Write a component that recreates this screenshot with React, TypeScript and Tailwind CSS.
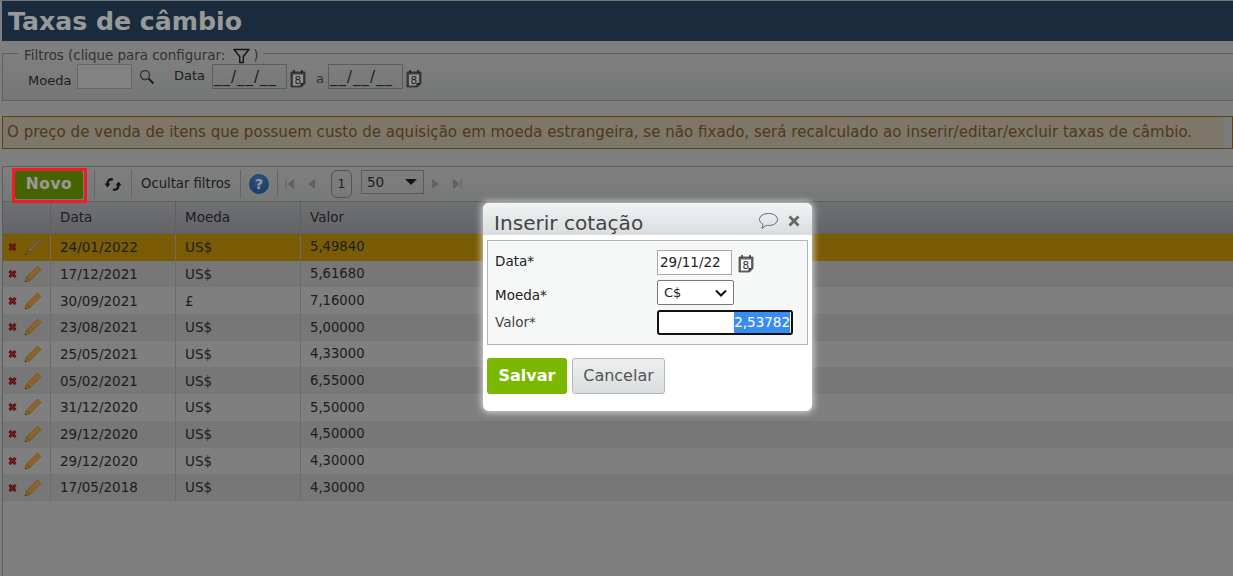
import React from "react";

const Calendar = () => (
  <svg width="16" height="19" viewBox="0 0 16 19" className="shrink-0">
    <path d="M1 3h14v11.500l-3.500 3.500H1z" fill="#6a6a6a" stroke="#444" strokeWidth="0.800" />
    <path d="M3 5.500h10v8.500l-2.500 2.500H3z" fill="#f6f6f6" />
    <path d="M4 1v3M12 1v3" stroke="#333" strokeWidth="1.500" />
    <text x="7.800" y="15" textAnchor="middle" fontSize="10.500" fontFamily="DejaVu Sans" fill="#333">8</text>
    <path d="M10.500 17.500l3.500-3.500h-3.500z" fill="#333" />
  </svg>
);

const Pencil = ({ faded }: { faded?: boolean }) => (
  <svg width="18" height="18" viewBox="0 0 18 18" className="shrink-0">
    {faded ? (
      <path d="M14 1.500l2.500 2.500L5.500 15l-4 1.500 1.500-4z" fill="#c9a050" stroke="#a08868" strokeWidth="1" />
    ) : (
      <path d="M13.500 1l3.500 3.500L5.500 16l-4.500 1 1-4.500z" fill="#e8a64a" stroke="#c8882e" strokeWidth="0.800" />
    )}
    <path d="M3 12.500l2.500 2.800" stroke="#a87428" strokeWidth="1" />
    <path d="M1 17l1.600-.4-1.200-1.200z" fill="#333" />
  </svg>
);

const Del = () => (
  <svg width="9" height="10" viewBox="0 0 9 10" className="shrink-0">
    <path d="M1.500 2l6 6M7.500 2l-6 6" stroke="#5a1a1a" strokeWidth="3" />
    <path d="M1.500 2l6 6M7.500 2l-6 6" stroke="#e0262c" strokeWidth="1.600" />
  </svg>
);

const rows = [
  ["24/01/2022", "US$", "5,49840"],
  ["17/12/2021", "US$", "5,61680"],
  ["30/09/2021", "£", "7,16000"],
  ["23/08/2021", "US$", "5,00000"],
  ["25/05/2021", "US$", "4,33000"],
  ["05/02/2021", "US$", "6,55000"],
  ["31/12/2020", "US$", "5,50000"],
  ["29/12/2020", "US$", "4,50000"],
  ["29/12/2020", "US$", "4,30000"],
  ["17/05/2018", "US$", "4,30000"],
];

export default function App() {
  return (
    <div className="relative h-[576px] w-[1233px] overflow-hidden bg-[#d4d4d4] font-['DejaVu_Sans',sans-serif] text-[13px] text-[#333]">
      <div className="flex h-full flex-col border-t border-t-[#c4c4c4] pl-[2px]">
        <div className="flex h-[40px] shrink-0 items-center bg-[#2b4966] pl-[6px] pt-[2px] text-[25.200px] font-bold text-white">Taxas de câmbio</div>

        <fieldset className="mx-0 mt-[5px] h-[55px] shrink-0 border border-r-0 border-[#a0a0a0] bg-gradient-to-b from-[#d4d4d4] to-[#c3c6c6] pl-[16px]">
          <legend className="flex h-[14px] translate-y-[3px] items-center px-[5px] text-[13.400px] leading-none text-[#555]">
            Filtros (clique para configurar:
            <svg width="17" height="16" viewBox="0 0 17 16" className="ml-[8px] mr-[3px]">
              <path d="M1 1.500h15L10.300 8.500v6h-3.600v-6z" fill="none" stroke="#222" strokeWidth="1.400" strokeLinejoin="round" />
            </svg>
            )
          </legend>
          <div className="flex items-start pl-[9px] pt-[4px]">
            <span className="mt-[7px] w-[49px]">Moeda</span>
            <div className="h-[25px] w-[55px] border border-[#aaa] bg-[#d9d9d9]" />
            <svg width="16" height="16" viewBox="0 0 16 16" className="ml-[7px] mt-[5px]">
              <circle cx="6" cy="6" r="4.500" fill="none" stroke="#555" strokeWidth="1.300" />
              <path d="M9.500 9.500l5 5" stroke="#333" strokeWidth="2" />
            </svg>
            <span className="ml-[19px] mt-[2px] w-[38px]">Data</span>
            <div className="flex h-[25px] w-[75px] items-end border border-[#999] pb-[3px] pl-[1px] text-[15px] leading-none tracking-[1px]">__/__/__</div>
            <div className="ml-[3px] mt-[5px]"><Calendar /></div>
            <span className="ml-[10px] mt-[5px] w-[12px] text-[#555]">a</span>
            <div className="flex h-[25px] w-[75px] items-end border border-[#999] pb-[3px] pl-[1px] text-[15px] leading-none tracking-[1px]">__/__/__</div>
            <div className="ml-[3px] mt-[5px]"><Calendar /></div>
          </div>
        </fieldset>

        <div className="mt-[15px] flex h-[33px] shrink-0 items-stretch border border-[#9e6c22] text-[15.070px] whitespace-nowrap text-[#84602f]">
          <div className="flex flex-1 items-center bg-[#d2c6b0] pl-[4px]">
            O preço de venda de itens que possuem custo de aquisição em moeda estrangeira, se não fixado, será recalculado ao inserir/editar/excluir taxas de câmbio.
          </div>
          <div className="w-[9px] bg-[#cccccc]" />
        </div>

        <div className="mt-[17px] flex min-h-0 flex-1 flex-col border-l border-[#9a9a9a]">
          <div className="flex h-[36px] shrink-0 items-center border-y border-[#a0a0a0] bg-gradient-to-b from-[#d4d4d4] to-[#c6c9c9]">
            <button className="ml-[12px] mt-[1px] flex h-[28px] w-[68px] items-center justify-center rounded-[2px] bg-[#73a500] pt-[1px] text-[15.500px] font-bold tracking-[0.500px] text-white">Novo</button>
            <div className="ml-[11px] h-[28px] w-px bg-[#a8a8a8]" />
            <svg width="18" height="15" viewBox="0 0 18 15" className="ml-[9px]">
              <path d="M9 2.500C5.500 1.500 3.500 3.500 3.500 7" fill="none" stroke="#222" strokeWidth="2.300" />
              <path d="M0.500 6.500h6l-3 4z" fill="#222" />
              <path d="M9 12.500c3.500 1 5.500-1 5.500-4.500" fill="none" stroke="#222" strokeWidth="2.300" />
              <path d="M11.500 8.500h6l-3-4z" fill="#222" />
            </svg>
            <div className="ml-[9px] h-[28px] w-px bg-[#a8a8a8]" />
            <span className="ml-[9px] w-[90px] text-[13.200px] whitespace-nowrap">Ocultar filtros</span>
            <div className="ml-[9px] h-[28px] w-px bg-[#a8a8a8]" />
            <div className="ml-[8px] flex h-[20px] w-[20px] items-center justify-center rounded-full bg-[radial-gradient(circle_at_50%_30%,#4f8fd0,#1f5aa0)] text-[14px] font-bold text-white">?</div>
            <div className="ml-[8px] h-[28px] w-px bg-[#a8a8a8]" />
            <svg width="9" height="10" viewBox="0 0 9 10" className="ml-[7px]"><path d="M1 0v10M9 0v10L3 5z" fill="#a4a4a4" stroke="#a4a4a4" strokeWidth="1" /></svg>
            <svg width="8" height="10" viewBox="0 0 8 10" className="ml-[13px]"><path d="M8 0v10L1 5z" fill="#a4a4a4" /></svg>
            <div className="ml-[16px] flex h-[28px] w-[21px] items-center justify-center rounded-[6px] border border-[#8a8a8a] text-[12.500px]">1</div>
            <div className="mb-[4px] ml-[9px] flex h-[24px] w-[63px] items-center justify-between border border-[#999] pl-[5px] pr-[6px] text-[13.500px]">
              50
              <svg width="12" height="6" viewBox="0 0 12 6"><path d="M0 0h12L6 6z" fill="#222" /></svg>
            </div>
            <svg width="8" height="10" viewBox="0 0 8 10" className="ml-[8px]"><path d="M0 0v10L7 5z" fill="#a4a4a4" /></svg>
            <svg width="9" height="10" viewBox="0 0 9 10" className="ml-[13px]"><path d="M8 0v10M0 0v10L6 5z" fill="#a4a4a4" stroke="#a4a4a4" strokeWidth="1" /></svg>
          </div>

          <div className="flex h-[32px] shrink-0 items-stretch border-b border-[#a0a0a0] bg-gradient-to-b from-[#babcc0] to-[#a4a7ab] text-[13.500px] text-[#333]">
            <div className="w-[48px] border-r border-[#a0a0a0]" />
            <div className="flex w-[125px] items-center border-r border-[#a0a0a0] pl-[9px]">Data</div>
            <div className="flex w-[125px] items-center border-r border-[#a0a0a0] pl-[9px]">Moeda</div>
            <div className="flex items-center pl-[9px]">Valor</div>
          </div>

          {rows.map((r, i) => (
            <div
              key={i}
              className={`flex h-[26.700px] shrink-0 items-stretch text-[13.500px] ${i === 0 ? "bg-[#cb990d]" : i % 2 ? "bg-[#c6c6c6]" : "bg-[#d4d4d4]"}`}
            >
              <div className="flex w-[48px] items-center border-r border-[#b4b4b4] pl-[5px]">
                <Del />
                <span className="ml-[7px]"><Pencil faded={i === 0} /></span>
              </div>
              <div className="flex w-[125px] items-center border-r border-[#b4b4b4] pl-[9px]">{r[0]}</div>
              <div className="flex w-[125px] items-center border-r border-[#b4b4b4] pl-[9px]">{r[1]}</div>
              <div className="flex items-center pl-[9px] text-[13.200px]">{r[2]}</div>
            </div>
          ))}
        </div>
      </div>

      <div className="absolute inset-0 bg-black/40" />

      <div className="absolute left-[12px] top-[168px] h-[35px] w-[75px] border-[3px] border-[#ee1c25]" />

      <div className="absolute left-[483px] top-[203px] flex h-[208px] w-[329px] flex-col rounded-[6px] bg-white shadow-[0_0_6px_2px_rgba(255,255,255,0.6)]">
        <div className="flex h-[32px] shrink-0 items-end justify-between rounded-t-[6px] bg-gradient-to-b from-[#f2f4f4] to-[#d9dddf] pl-[11px] pr-[12px]">
          <span className="text-[20.100px] leading-[24px] text-[#444]">Inserir cotação</span>
          <div className="mb-[5px] flex items-center gap-[9px]">
            <svg width="21" height="18" viewBox="0 0 21 18">
              <path d="M10.500 1.500c5 0 9 2.500 9 6s-4 6-9 6c-.8 0-1.500 0-2.200-.2L4 16.500l1-4.200C3 11 1.500 9.500 1.500 7.500c0-3.500 4-6 9-6z" fill="none" stroke="#666" strokeWidth="1" />
            </svg>
            <svg width="12" height="12" viewBox="0 0 12 12"><path d="M1.500 1.500l9 9M10.500 1.500l-9 9" stroke="#666" strokeWidth="2.800" /></svg>
          </div>
        </div>

        <div className="mx-[4px] mt-[5px] h-[105px] shrink-0 border border-[#aeb4b8] bg-[#f6f7f7] pl-[7px] text-[13.500px] text-[#222]">
          <div className="flex h-[30px] items-start">
            <span className="mt-[10px] w-[162px]">Data*</span>
            <div className="mt-[9px] flex h-[25px] w-[75px] shrink-0 items-center border border-[#aaa] bg-white pl-[2px]">29/11/22</div>
            <div className="ml-[6px] mt-[13px]"><Calendar /></div>
          </div>
          <div className="mt-[9px] flex h-[30px] items-start">
            <span className="mt-[5px] w-[162px]">Moeda*</span>
            <div className="flex h-[25px] w-[77px] items-center justify-between rounded-[2px] border border-[#777] bg-white pl-[6px] pr-[6px] text-[13px]">
              C$
              <svg width="12" height="8" viewBox="0 0 12 8"><path d="M1 1.500l5 5 5-5" fill="none" stroke="#111" strokeWidth="2" /></svg>
            </div>
          </div>
          <div className="flex items-start">
            <span className="mt-[2px] w-[162px] text-[#444]">Valor*</span>
            <div className="flex h-[25px] w-[136px] items-center justify-end rounded-[3px] border-2 border-[#111] bg-white pr-[1px]">
              <span className="bg-[#3b8cf2] text-white">2,53782</span>
            </div>
          </div>
        </div>

        <div className="ml-[4px] mt-[13px] flex gap-[5px]">
          <button className="flex h-[36px] w-[80px] items-center justify-center rounded-[3px] bg-[#7ab800] text-[16px] font-bold text-white">Salvar</button>
          <button className="flex h-[36px] w-[93px] items-center justify-center rounded-[3px] border border-[#b5b9bb] bg-gradient-to-b from-[#eef0f0] to-[#d9dcde] text-[16px] text-[#555]">Cancelar</button>
        </div>
      </div>
    </div>
  );
}
